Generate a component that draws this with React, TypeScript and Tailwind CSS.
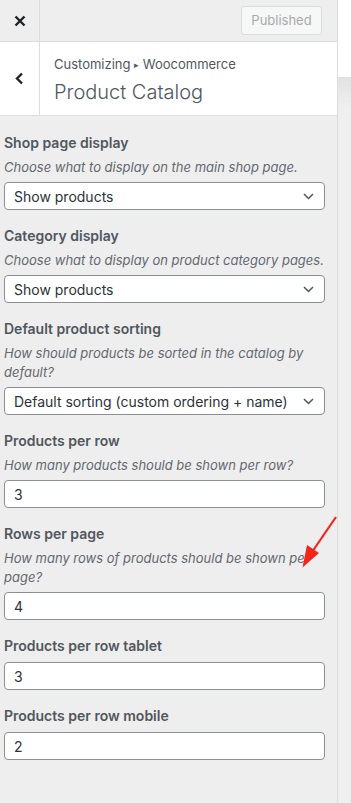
import React from "react";

type Field = {
  label: string;
  desc?: string;
  kind: "select" | "input";
  value: string;
};

const fields: Field[] = [
  { label: "Shop page display", desc: "Choose what to display on the main shop page.", kind: "select", value: "Show products" },
  { label: "Category display", desc: "Choose what to display on product category pages.", kind: "select", value: "Show products" },
  { label: "Default product sorting", desc: "How should products be sorted in the catalog by default?", kind: "select", value: "Default sorting (custom ordering + name)" },
  { label: "Products per row", desc: "How many products should be shown per row?", kind: "input", value: "3" },
  { label: "Rows per page", desc: "How many rows of products should be shown per page?", kind: "input", value: "4" },
  { label: "Products per row tablet", kind: "input", value: "3" },
  { label: "Products per row mobile", kind: "input", value: "2" },
];

const ChevronDown = () => (
  <svg width="11" height="7" viewBox="0 0 11 7" fill="none" className="shrink-0">
    <path d="M1 1l4.5 4.5L10 1" stroke="#50575e" strokeWidth="1.5" />
  </svg>
);

const Control: React.FC<{ field: Field }> = ({ field }) => (
  <div className="mb-[16px]">
    <div className={`text-[14px] font-semibold leading-[20px] text-[#50575e] ${field.desc ? "mb-[5px]" : "mb-[6px]"}`}>
      {field.label}
    </div>
    {field.desc && (
      <div className="mb-[5px] text-[13px] italic leading-[19px] text-[#646970]">{field.desc}</div>
    )}
    <div className="flex h-[28px] items-center justify-between rounded-[4px] border border-[#8c8f94] bg-white pl-[9px] pr-[10px] text-[14px] text-[#2c3338]">
      <span>{field.value}</span>
      {field.kind === "select" && <ChevronDown />}
    </div>
  </div>
);

export default function App() {
  return (
    <div className="relative flex h-[803px] w-[351px] overflow-hidden bg-[#eee] font-['Inter','Liberation_Sans',sans-serif]">
      {/* sidebar */}
      <div className="flex w-[338px] shrink-0 flex-col border-r border-[#ddd] bg-[#eee]">
        {/* top actions */}
        <div className="flex h-[42px] items-center border-b border-[#ddd]">
          <div className="flex h-full w-[40px] items-center justify-center border-r border-[#ddd]">
            <svg width="12" height="12" viewBox="0 0 12 12">
              <path d="M1.5 1.5l9 9M10.5 1.5l-9 9" stroke="#1d2327" strokeWidth="2.4" />
            </svg>
          </div>
          <div className="flex flex-1 justify-end pr-[15px]">
            <div className="flex h-[29px] w-[81px] items-center justify-center rounded-[3px] border border-[#dcdcde] bg-[#f6f7f7] text-[13px] text-[#a7aaad]">
              Published
            </div>
          </div>
        </div>

        {/* section title */}
        <div className="flex h-[74px] border-b border-[#ddd] bg-white">
          <div className="flex w-[40px] items-center justify-center border-r border-[#ddd]">
            <svg width="9" height="13" viewBox="0 0 9 13" fill="none">
              <path d="M7 1.5L2 6.5l5 5" stroke="#1d2327" strokeWidth="2.4" />
            </svg>
          </div>
          <div className="flex flex-col justify-center pl-[14px] pt-[2px]">
            <div className="text-[13px] leading-[18px] text-[#50575e]">
              Customizing <span className="text-[9px] align-[1px]">▸</span> Woocommerce
            </div>
            <div className="mt-[6px] text-[20px] font-light leading-[24px] text-[#50575e]">Product Catalog</div>
          </div>
        </div>

        {/* controls */}
        <div className="pl-[4px] pr-[12px] pt-[17px]">
          {fields.map((f) => (
            <Control key={f.label} field={f} />
          ))}
        </div>
      </div>

      {/* preview edge */}
      <div className="flex flex-1 flex-col">
        <div className="h-[77px] bg-white" />
        <div className="h-[30px] bg-gradient-to-b from-[#e2e2e2] to-[#efefef]" />
        <div className="flex-1 bg-[#efefef]" />
      </div>

      {/* red annotation arrow */}
      <svg className="pointer-events-none absolute left-0 top-0" width="351" height="803">
        <line x1="336" y1="517" x2="312" y2="552" stroke="#f2251b" strokeWidth="2.2" />
        <polygon points="302.5,567.5 307,545 319,553" fill="#f2251b" />
      </svg>
    </div>
  );
}
